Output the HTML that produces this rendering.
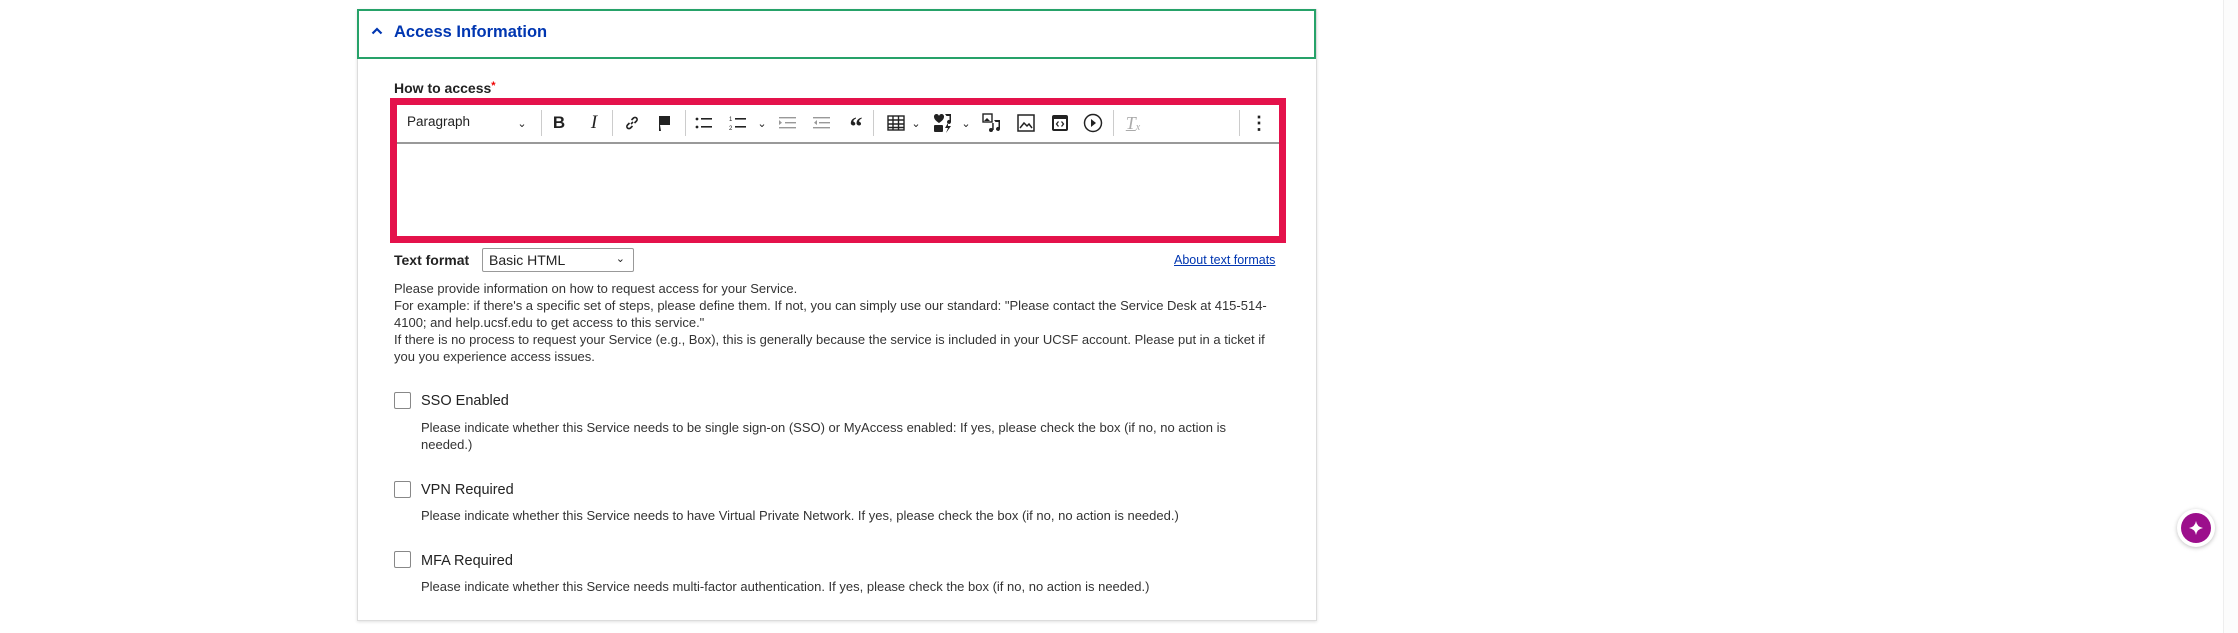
<!DOCTYPE html>
<html><head><meta charset="utf-8"><style>
body{margin:0;width:2238px;height:633px;background:#fff;font-family:"Liberation Sans",sans-serif;position:relative;overflow:hidden;color:#222}
.a{position:absolute}
.panel{left:357px;top:9px;width:958px;height:610px;border:1px solid #dcdcdc;box-shadow:0 1px 3px rgba(0,0,0,.12)}
.hdr{left:357px;top:9px;width:955px;height:46px;border:2px solid #26a269;background:#fff}
.ic{position:absolute;top:113px;width:20px;height:20px;display:flex;align-items:center;justify-content:center;font-size:18px;color:#222}
.sep{position:absolute;top:110px;width:1px;height:26px;background:#ccc}
.desc{font-size:13px;color:#333;line-height:17px}
.cb{position:absolute;width:15px;height:15px;border:1px solid #888;border-radius:2px;background:#fff}
.lbl{font-size:14.5px;color:#222}
</style></head><body>
<div class="a panel"></div>
<div class="a hdr"></div>
<svg class="a" style="left:371px;top:27px" width="12" height="8" viewBox="0 0 12 8"><path d="M1.5 6.5L6 2l4.5 4.5" fill="none" stroke="#0036b1" stroke-width="2.2"/></svg>
<div class="a" style="left:394px;top:23px;font-size:16.5px;font-weight:bold;color:#0036b1">Access Information</div>
<div class="a" style="left:394px;top:80px;font-size:14px;font-weight:bold">How to access<span style="color:#e00;font-size:11px;vertical-align:top">*</span></div>
<div class="a" style="left:390px;top:98px;width:882px;height:131px;border:7px solid #e4124b;background:#fff"></div>
<div class="a" style="left:397px;top:142px;width:882px;height:2px;background:#999"></div>
<div class="a" style="left:407px;top:114px;font-size:13.5px;color:#222">Paragraph</div>
<div class="ic" style="left:512px;font-size:11px">&#8964;</div>
<div class="sep" style="left:541px"></div>
<div class="ic" style="left:549px;font-weight:bold;font-size:17px">B</div>
<div class="ic" style="left:584px;font-style:italic;font-family:'Liberation Serif';font-size:19px">I</div>
<div class="sep" style="left:612px"></div>
<div class="ic" style="left:622px">
<svg width="16" height="16" viewBox="0 0 16 16" fill="none" stroke="#222" stroke-width="1.6"><path d="M7 9l2-2M5.5 8L3.5 10a2.1 2.1 0 003 3l2-2M10.5 8l2-2a2.1 2.1 0 00-3-3l-2 2"/></svg></div>
<div class="ic" style="left:655px"><svg width="18" height="18" viewBox="0 0 18 18"><path d="M3 2h11v9H4l1 6H3z" fill="#222"/></svg></div>
<div class="sep" style="left:685px"></div>
<div class="ic" style="left:694px"><svg width="18" height="14" viewBox="0 0 18 14" fill="#222"><circle cx="2" cy="3" r="1.4"/><circle cx="2" cy="11" r="1.4"/><rect x="6" y="2" width="11" height="1.6"/><rect x="6" y="10" width="11" height="1.6"/></svg></div>
<div class="ic" style="left:728px"><svg width="18" height="16" viewBox="0 0 18 16" fill="#222"><text x="0" y="6" font-size="6" font-family="Liberation Sans">1</text><text x="0" y="15" font-size="6" font-family="Liberation Sans">2</text><rect x="6" y="3" width="11" height="1.6"/><rect x="6" y="11" width="11" height="1.6"/></svg></div>
<div class="ic" style="left:752px;font-size:11px">&#8964;</div>
<div class="ic" style="left:778px"><svg width="18" height="14" viewBox="0 0 18 14" fill="#999"><rect x="0" y="1" width="17" height="1.4"/><rect x="6" y="6" width="11" height="1.4"/><rect x="0" y="11" width="17" height="1.4"/><path d="M0 4l3 2.7L0 9z"/></svg></div>
<div class="ic" style="left:812px"><svg width="18" height="14" viewBox="0 0 18 14" fill="#999"><rect x="0" y="1" width="17" height="1.4"/><rect x="6" y="6" width="11" height="1.4"/><rect x="0" y="11" width="17" height="1.4"/><path d="M4 4L1 6.7 4 9z"/></svg></div>
<div class="ic" style="left:846px;font-weight:bold;font-size:26px;top:117px;font-family:'Liberation Serif'">&#8220;</div>
<div class="sep" style="left:873px"></div>
<div class="ic" style="left:886px"><svg width="18" height="16" viewBox="0 0 18 16" fill="none" stroke="#222" stroke-width="1.4"><rect x="1" y="1" width="16" height="14"/><path d="M1 5h16M1 9h16M1 12.5h16M6 1v14M11.5 1v14"/></svg></div>
<div class="ic" style="left:906px;font-size:11px">&#8964;</div>
<div class="ic" style="left:933px"><svg width="20" height="20" viewBox="0 0 20 20" fill="#222"><path d="M1 4a2.5 2.5 0 015-1 2.5 2.5 0 015 1c0 3-5 6-5 6S1 7 1 4z"/><path d="M12 1h6v8a2 2 0 11-1.5-2V3h-3z"/><rect x="1" y="12" width="9" height="7" rx="1"/><path d="M15 10l-3 5h3l-2 5 5-7h-3z"/></svg></div>
<div class="ic" style="left:956px;font-size:11px">&#8964;</div>
<div class="ic" style="left:982px"><svg width="20" height="20" viewBox="0 0 20 20" fill="#222"><rect x="1" y="1" width="9" height="8" fill="none" stroke="#222" stroke-width="1.4"/><path d="M2 8l3-3 3 3z"/><path d="M12 7h6v9a2 2 0 11-1.5-2V9h-3z"/><circle cx="9" cy="17" r="2"/><rect x="10.2" y="10" width="1.5" height="7"/></svg></div>
<div class="ic" style="left:1016px"><svg width="18" height="18" viewBox="0 0 18 18" fill="none" stroke="#222" stroke-width="1.5"><rect x="1" y="1" width="16" height="16"/><path d="M3 14l4-5 3 3 2-2 3 4"/></svg></div>
<div class="ic" style="left:1050px"><svg width="18" height="18" viewBox="0 0 18 18"><rect x="1" y="1" width="16" height="16" rx="2" fill="#222"/><rect x="3" y="5" width="12" height="10" fill="#fff"/><path d="M7.5 7.5L5.5 10l2 2.5M10.5 7.5l2 2.5-2 2.5" stroke="#222" stroke-width="1.3" fill="none"/></svg></div>
<div class="ic" style="left:1083px"><svg width="20" height="20" viewBox="0 0 20 20"><circle cx="10" cy="10" r="8.5" fill="none" stroke="#222" stroke-width="1.5"/><path d="M8 6l5 4-5 4z" fill="#222"/></svg></div>
<div class="sep" style="left:1113px"></div>
<div class="ic" style="left:1123px;color:#aaa;font-family:'Liberation Serif';font-style:italic;font-size:18px"><span style="text-decoration:underline">T</span><span style="font-size:10px;margin-top:8px">x</span></div>
<div class="sep" style="left:1239px"></div>
<div class="ic" style="left:1249px;font-weight:bold;font-size:18px">&#8942;</div>
<div class="a" style="left:394px;top:252px;font-size:14px;font-weight:bold">Text format</div>
<div class="a" style="left:482px;top:248px;width:150px;height:22px;border:1px solid #999;border-radius:2px;font-size:14px;line-height:22px;box-sizing:content-box"><span style="margin-left:6px">Basic HTML</span><span style="position:absolute;right:8px;top:-1px;font-size:11px">&#8964;</span></div>
<div class="a" style="left:1174px;top:253px;font-size:12.5px;color:#0036b1;text-decoration:underline">About text formats</div>
<div class="a desc" style="left:394px;top:280px;width:878px">Please provide information on how to request access for your Service.<br>For example: if there's a specific set of steps, please define them. If not, you can simply use our standard: "Please contact the Service Desk at 415-514-4100; and help.ucsf.edu to get access to this service."<br>If there is no process to request your Service (e.g., Box), this is generally because the service is included in your UCSF account. Please put in a ticket if you you experience access issues.</div>
<div class="cb" style="left:394px;top:392px"></div>
<div class="a lbl" style="left:421px;top:393px">SSO Enabled</div>
<div class="a desc" style="left:421px;top:419px;width:830px">Please indicate whether this Service needs to be single sign-on (SSO) or MyAccess enabled: If yes, please check the box (if no, no action is needed.)</div>
<div class="cb" style="left:394px;top:481px"></div>
<div class="a lbl" style="left:421px;top:482px">VPN Required</div>
<div class="a desc" style="left:421px;top:507px">Please indicate whether this Service needs to have Virtual Private Network. If yes, please check the box (if no, no action is needed.)</div>
<div class="cb" style="left:394px;top:551px"></div>
<div class="a lbl" style="left:421px;top:553px">MFA Required</div>
<div class="a desc" style="left:421px;top:578px">Please indicate whether this Service needs multi-factor authentication. If yes, please check the box (if no, no action is needed.)</div>
<div class="a" style="left:2223px;top:0;width:1px;height:633px;background:#eee"></div>
<div class="a" style="left:2224px;top:0;width:14px;height:633px;background:#fcfcfc"></div>
<div class="a" style="left:2177px;top:509px;width:38px;height:38px;border-radius:50%;background:#fff;box-shadow:0 1px 4px rgba(0,0,0,.25)"></div>
<div class="a" style="left:2181px;top:513px;width:30px;height:30px;border-radius:50%;background:#9c0f8c"></div>
<svg class="a" style="left:2187px;top:519px" width="18" height="18" viewBox="0 0 18 18"><path d="M9 2Q10 8 16 9Q10 10 9 16Q8 10 2 9Q8 8 9 2z" fill="#fff"/></svg>
</body></html>
